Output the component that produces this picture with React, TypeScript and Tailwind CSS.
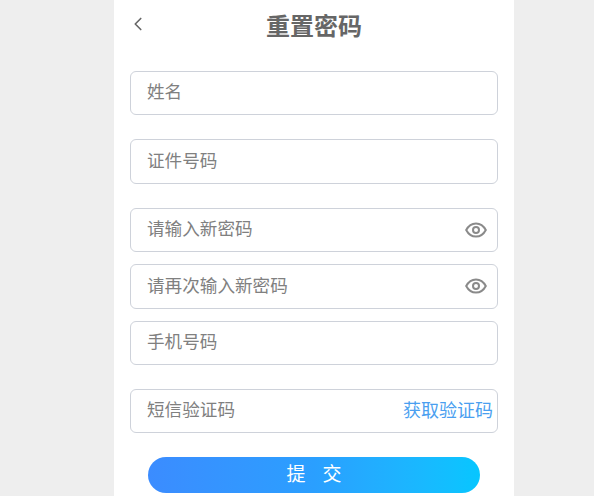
import { ChevronLeft } from 'lucide-react';

const font = { fontFamily: '"Noto Sans CJK SC", sans-serif' };

function EyeIcon() {
  return (
    <svg width="22" height="16" viewBox="0 0 22 16" fill="none" stroke="#8a8a8a" strokeWidth="2">
      <path d="M1.200 8C3.500 3.600 7 1.400 11 1.400S18.500 3.600 20.800 8C18.500 12.400 15 14.600 11 14.600S3.500 12.400 1.200 8Z" />
      <circle cx="11" cy="8" r="3" />
    </svg>
  );
}

function Field({
  label,
  className,
  children,
}: {
  label: string;
  className: string;
  children?: React.ReactNode;
}) {
  return (
    <div
      className={`flex items-center justify-between rounded-md border border-[#ced2da] pl-4 ${className}`}
    >
      <span className="pb-[3px] text-[17.6px] text-[#808080]">{label}</span>
      {children}
    </div>
  );
}

export default function App() {
  return (
    <div className="flex h-[496px] justify-center overflow-hidden bg-[#eeeeee]" style={font}>
      <div className="ml-[34px] h-full w-[400px] bg-white px-4">
        <div className="relative flex h-[71px] justify-center pt-[7px]">
          <ChevronLeft
            size={22}
            strokeWidth={1.8}
            className="absolute left-[-3px] top-[13px] text-[#666666]"
          />
          <h1 className="text-2xl leading-9 font-bold text-[#666666]">重置密码</h1>
        </div>
        <Field label="姓名" className="h-11" />
        <Field label="证件号码" className="mt-6 h-[45px]" />
        <Field label="请输入新密码" className="mt-6 h-11 pr-[10px]">
          <EyeIcon />
        </Field>
        <Field label="请再次输入新密码" className="mt-3 h-[45px] pr-[10px]">
          <div className="pb-px">
            <EyeIcon />
          </div>
        </Field>
        <Field label="手机号码" className="mt-3 h-11" />
        <Field label="短信验证码" className="mt-6 h-11 pr-1">
          <span className="pb-1 text-lg text-[#4a9ff0]">获取验证码</span>
        </Field>
        <div className="mt-6 flex justify-center">
          <button className="h-9 w-[332px] rounded-full bg-gradient-to-r from-[#3b8cff] via-[#2a9fff] to-[#06c6ff] pb-1 text-[19px] text-white">
            提&nbsp;&nbsp;&nbsp;&nbsp;交
          </button>
        </div>
      </div>
    </div>
  );
}
